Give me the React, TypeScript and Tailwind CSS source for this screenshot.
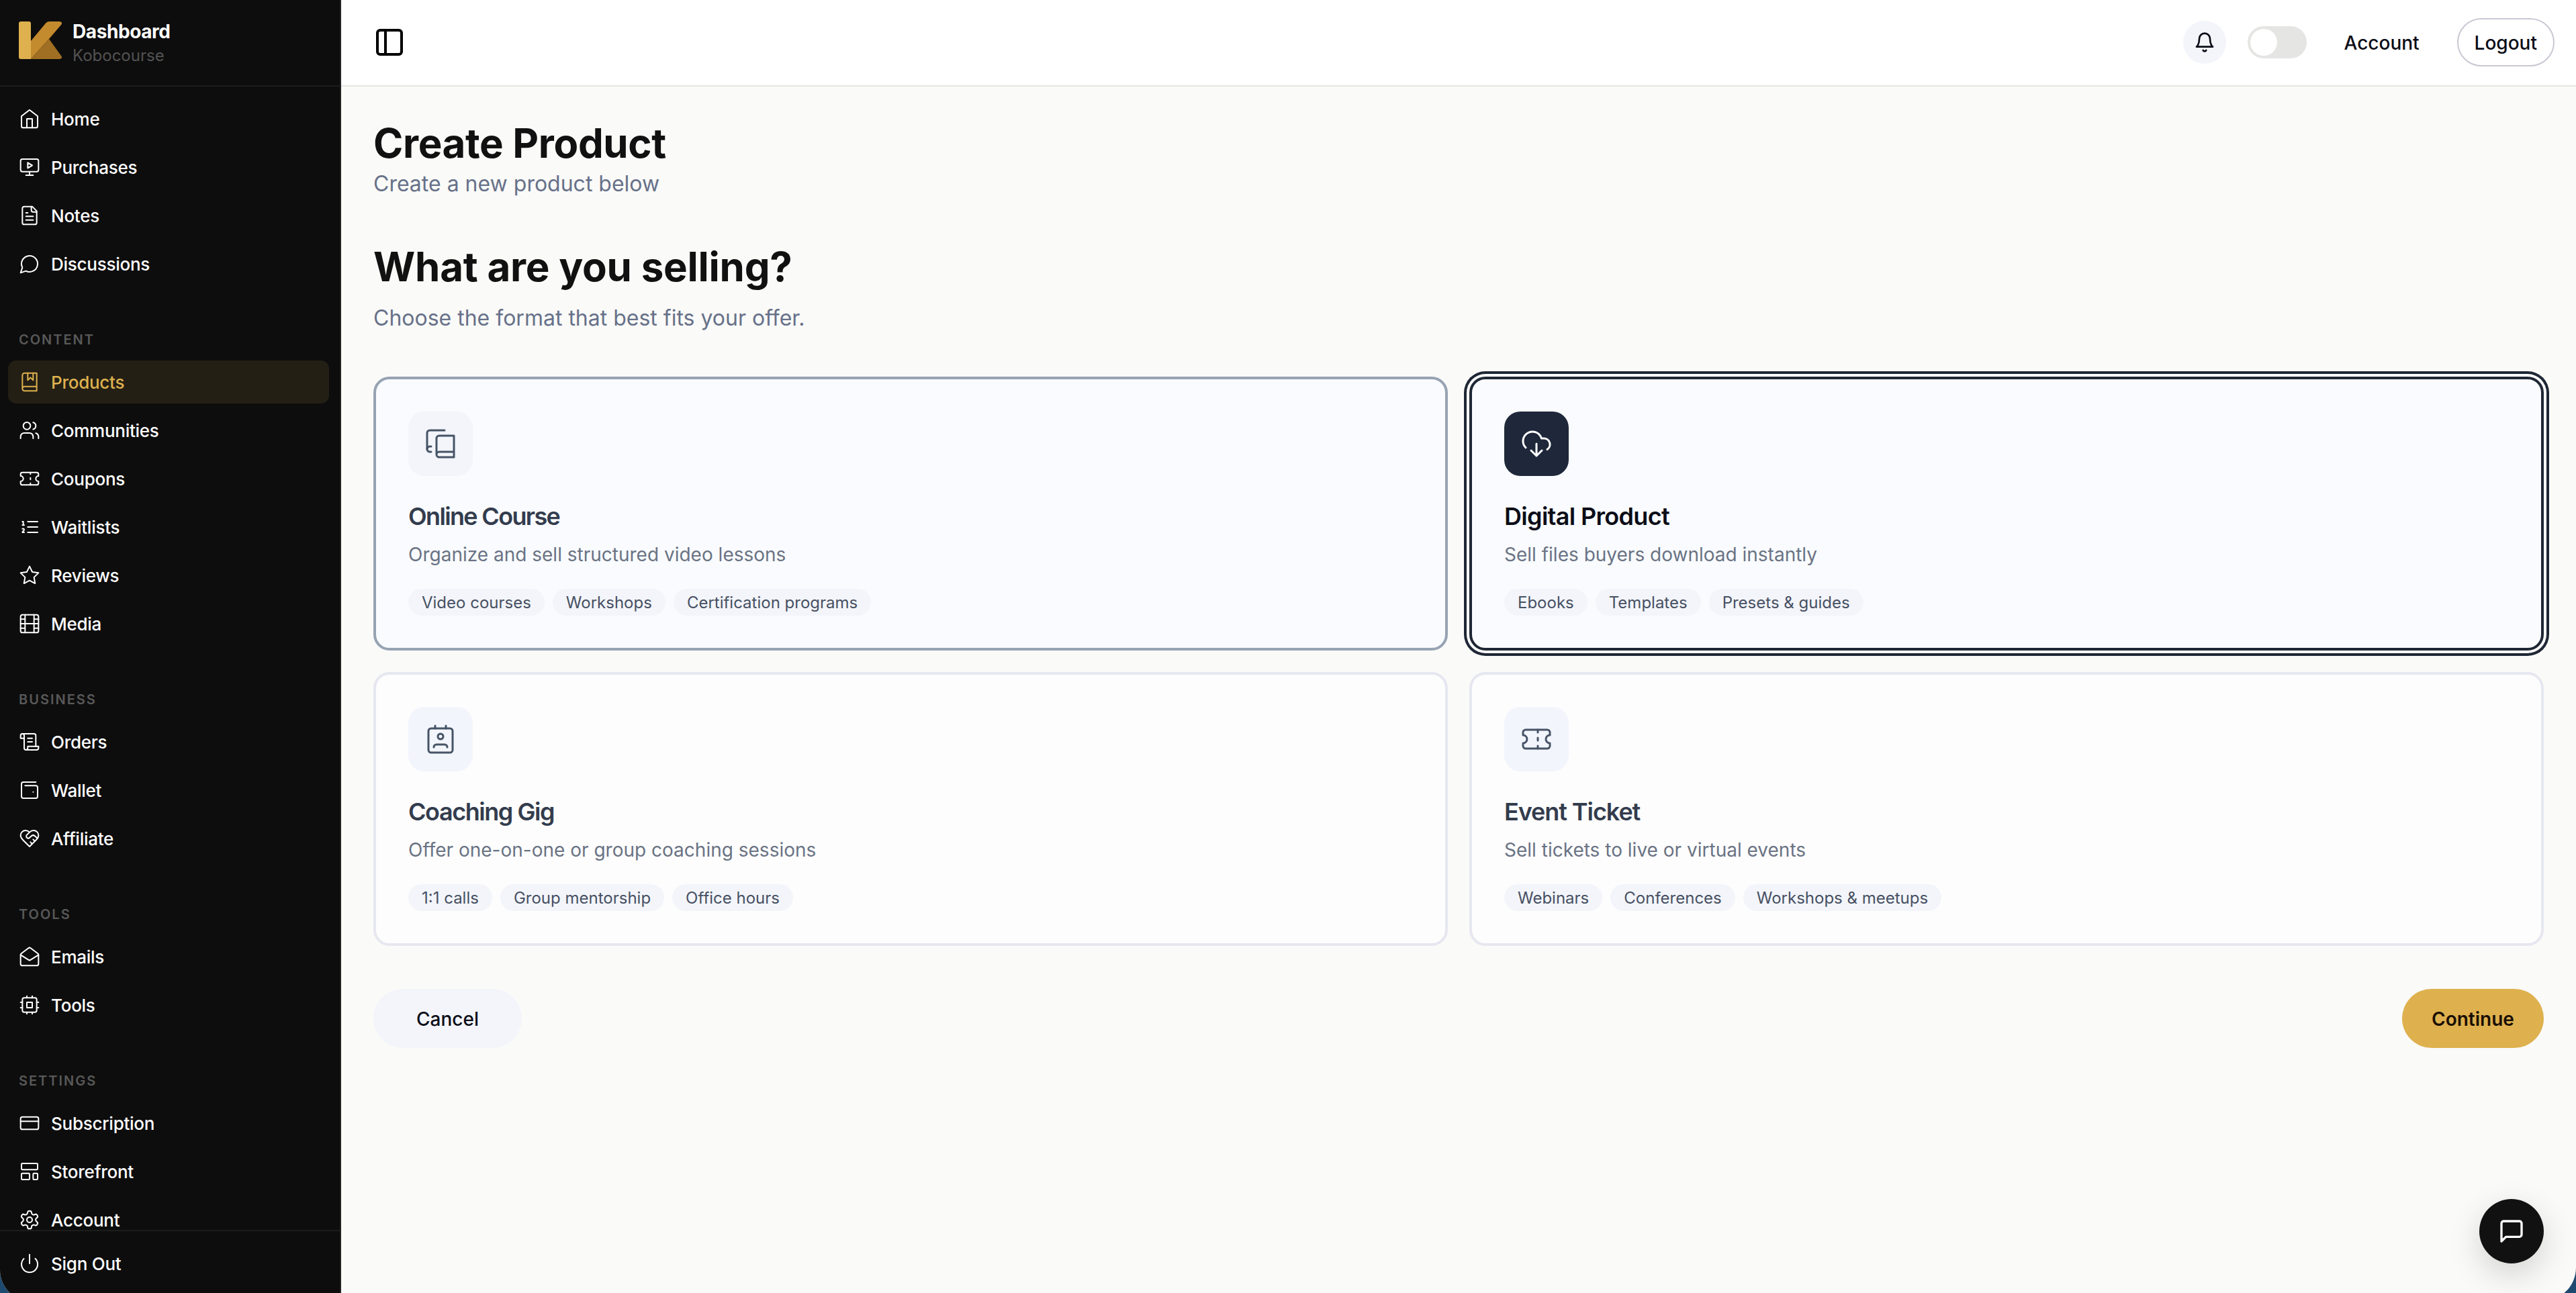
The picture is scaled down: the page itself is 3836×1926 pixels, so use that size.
import type { ReactNode } from "react";

type IconName =
  | "home"
  | "monitorPlay"
  | "fileText"
  | "messageCircle"
  | "bookMarked"
  | "users"
  | "ticket"
  | "listOrdered"
  | "star"
  | "film"
  | "scroll"
  | "wallet"
  | "handshake"
  | "mailOpen"
  | "cpu"
  | "creditCard"
  | "layout"
  | "settings"
  | "power"
  | "panelLeft"
  | "bell"
  | "bookCopy"
  | "cloudDownload"
  | "contact"
  | "messageSquare";

const ICONS: Record<IconName, ReactNode> = {
  home: (
    <>
      <path d="m3 9 9-7 9 7v11a2 2 0 0 1-2 2H5a2 2 0 0 1-2-2z" />
      <path d="M9 22V12h6v10" />
    </>
  ),
  monitorPlay: (
    <>
      <path d="m10 7 5 3-5 3Z" />
      <rect width="20" height="14" x="2" y="3" rx="2" />
      <path d="M12 17v4M8 21h8" />
    </>
  ),
  fileText: (
    <>
      <path d="M15 2H6a2 2 0 0 0-2 2v16a2 2 0 0 0 2 2h12a2 2 0 0 0 2-2V7Z" />
      <path d="M14 2v4a2 2 0 0 0 2 2h4M10 9H8M16 13H8M16 17H8" />
    </>
  ),
  messageCircle: <path d="M7.9 20A9 9 0 1 0 4 16.1L2 22Z" />,
  bookMarked: (
    <>
      <path d="M4 19.5v-15A2.5 2.5 0 0 1 6.5 2H20v20H6.5a2.5 2.5 0 0 1 0-5H20" />
      <path d="M10 2v8l3-3 3 3V2" />
    </>
  ),
  users: (
    <>
      <path d="M16 21v-2a4 4 0 0 0-4-4H6a4 4 0 0 0-4 4v2" />
      <circle cx="9" cy="7" r="4" />
      <path d="M22 21v-2a4 4 0 0 0-3-3.87M16 3.13a4 4 0 0 1 0 7.75" />
    </>
  ),
  ticket: (
    <>
      <path d="M2 9a3 3 0 0 1 0 6v2a2 2 0 0 0 2 2h16a2 2 0 0 0 2-2v-2a3 3 0 0 1 0-6V7a2 2 0 0 0-2-2H4a2 2 0 0 0-2 2Z" />
      <path d="M13 5v2M13 17v2M13 11v2" />
    </>
  ),
  listOrdered: (
    <>
      <path d="M10 6h11M10 12h11M10 18h11" />
      <path d="M4 6h1v4M4 10h2M6 18H4c0-1 2-2 2-3s-1-1.500-2-1" />
    </>
  ),
  star: (
    <path d="m12 2 3.090 6.260L22 9.270l-5 4.870 1.180 6.880L12 17.770l-6.180 3.250L7 14.140 2 9.270l6.910-1.010L12 2z" />
  ),
  film: (
    <>
      <rect width="20" height="20" x="2" y="2" rx="2.180" />
      <path d="M7 2v20M17 2v20M2 12h20M2 7h5M2 17h5M17 17h5M17 7h5" />
    </>
  ),
  scroll: (
    <>
      <path d="M8 21h12a2 2 0 0 0 2-2v-2H10v2a2 2 0 1 1-4 0V5a2 2 0 1 0-4 0v3h4" />
      <path d="M19 17V5a2 2 0 0 0-2-2H4M15 8h-5M15 12h-5" />
    </>
  ),
  wallet: (
    <>
      <path d="M19 3H5a2 2 0 0 0-2 2v14a2 2 0 0 0 2 2h14a2 2 0 0 0 2-2V9a2 2 0 0 0-2-2H7" />
      <path d="M16 14h.01" />
    </>
  ),
  handshake: (
    <>
      <path d="M19 14c1.490-1.460 3-3.210 3-5.500A5.500 5.500 0 0 0 16.500 3c-1.760 0-3 .5-4.500 2-1.500-1.500-2.740-2-4.500-2A5.500 5.500 0 0 0 2 8.500c0 2.300 1.500 4.050 3 5.500l7 7Z" />
      <path d="M12 5 9.040 7.960a2.170 2.170 0 0 0 0 3.080c.82.82 2.130.85 3 .07l2.070-1.900a2.820 2.820 0 0 1 3.790 0l2.960 2.660M18 15l-2-2M15 18l-2-2" />
    </>
  ),
  mailOpen: (
    <>
      <path d="M21.200 8.400c.5.38.8.97.8 1.600v10a2 2 0 0 1-2 2H4a2 2 0 0 1-2-2V10a2 2 0 0 1 .8-1.600l8-6a2 2 0 0 1 2.400 0l8 6Z" />
      <path d="m22 10-8.970 5.700a1.940 1.940 0 0 1-2.060 0L2 10" />
    </>
  ),
  cpu: (
    <>
      <rect x="4" y="4" width="16" height="16" rx="2" />
      <rect x="9" y="9" width="6" height="6" />
      <path d="M15 2v2M15 20v2M2 15h2M2 9h2M20 15h2M20 9h2M9 2v2M9 20v2" />
    </>
  ),
  creditCard: (
    <>
      <rect width="20" height="14" x="2" y="5" rx="2" />
      <path d="M2 10h20" />
    </>
  ),
  layout: (
    <>
      <rect width="18" height="7" x="3" y="3" rx="1" />
      <rect width="9" height="7" x="3" y="14" rx="1" />
      <rect width="5" height="7" x="16" y="14" rx="1" />
    </>
  ),
  settings: (
    <>
      <path d="M12.220 2h-.44a2 2 0 0 0-2 2v.18a2 2 0 0 1-1 1.730l-.43.25a2 2 0 0 1-2 0l-.15-.08a2 2 0 0 0-2.730.73l-.22.38a2 2 0 0 0 .73 2.730l.15.1a2 2 0 0 1 1 1.720v.51a2 2 0 0 1-1 1.740l-.15.09a2 2 0 0 0-.73 2.730l.22.38a2 2 0 0 0 2.730.73l.15-.08a2 2 0 0 1 2 0l.43.25a2 2 0 0 1 1 1.730V20a2 2 0 0 0 2 2h.44a2 2 0 0 0 2-2v-.18a2 2 0 0 1 1-1.730l.43-.25a2 2 0 0 1 2 0l.15.08a2 2 0 0 0 2.730-.73l.22-.39a2 2 0 0 0-.73-2.730l-.15-.08a2 2 0 0 1-1-1.740v-.5a2 2 0 0 1 1-1.740l.15-.09a2 2 0 0 0 .73-2.730l-.22-.38a2 2 0 0 0-2.730-.73l-.15.08a2 2 0 0 1-2 0l-.43-.25a2 2 0 0 1-1-1.730V4a2 2 0 0 0-2-2z" />
      <circle cx="12" cy="12" r="3" />
    </>
  ),
  power: <path d="M12 2v10M18.400 6.600a9 9 0 1 1-12.770.04" />,
  panelLeft: (
    <>
      <rect width="18" height="18" x="3" y="3" rx="2" />
      <path d="M9 3v18" />
    </>
  ),
  bell: (
    <path d="M6 8a6 6 0 0 1 12 0c0 7 3 9 3 9H3s3-2 3-9M10.300 21a1.940 1.940 0 0 0 3.400 0" />
  ),
  bookCopy: (
    <>
      <path d="M2 16V4a2 2 0 0 1 2-2h11" />
      <path d="M5 14H4a2 2 0 1 0 0 4h1M22 18H11a2 2 0 1 0 0 4h11V6H11a2 2 0 0 0-2 2v12" />
    </>
  ),
  cloudDownload: (
    <path d="M4 14.899A7 7 0 1 1 15.710 8h1.790a4.500 4.500 0 0 1 2.500 8.242M12 12v9M8 17l4 4 4-4" />
  ),
  contact: (
    <>
      <path d="M17 18a2 2 0 0 0-2-2H9a2 2 0 0 0-2 2" />
      <rect width="18" height="18" x="3" y="4" rx="2" />
      <circle cx="12" cy="10" r="2" />
      <path d="M8 2v2M16 2v2" />
    </>
  ),
  messageSquare: <path d="M21 15a2 2 0 0 1-2 2H7l-4 4V5a2 2 0 0 1 2-2h14a2 2 0 0 1 2 2z" />,
};

function Icon({ name, size = 32, stroke = 1.5 }: { name: IconName; size?: number; stroke?: number }) {
  return (
    <svg
      width={size}
      height={size}
      viewBox="0 0 24 24"
      fill="none"
      stroke="currentColor"
      strokeWidth={stroke}
      strokeLinecap="round"
      strokeLinejoin="round"
      className="shrink-0"
    >
      {ICONS[name]}
    </svg>
  );
}

type NavItem = { label: string; icon: IconName; active?: boolean };

const NAV: { title?: string; items: NavItem[] }[] = [
  {
    items: [
      { label: "Home", icon: "home" },
      { label: "Purchases", icon: "monitorPlay" },
      { label: "Notes", icon: "fileText" },
      { label: "Discussions", icon: "messageCircle" },
    ],
  },
  {
    title: "Content",
    items: [
      { label: "Products", icon: "bookMarked", active: true },
      { label: "Communities", icon: "users" },
      { label: "Coupons", icon: "ticket" },
      { label: "Waitlists", icon: "listOrdered" },
      { label: "Reviews", icon: "star" },
      { label: "Media", icon: "film" },
    ],
  },
  {
    title: "Business",
    items: [
      { label: "Orders", icon: "scroll" },
      { label: "Wallet", icon: "wallet" },
      { label: "Affiliate", icon: "handshake" },
    ],
  },
  {
    title: "Tools",
    items: [
      { label: "Emails", icon: "mailOpen" },
      { label: "Tools", icon: "cpu" },
    ],
  },
  {
    title: "Settings",
    items: [
      { label: "Subscription", icon: "creditCard" },
      { label: "Storefront", icon: "layout" },
      { label: "Account", icon: "settings" },
    ],
  },
];

type Product = {
  title: string;
  titleClass: string;
  description: string;
  icon: IconName;
  tags: string[];
  card: string;
  badge: string;
};

const PRODUCTS: Product[] = [
  {
    title: "Online Course",
    titleClass: "text-[#333c4d] tracking-[-0.046em]",
    description: "Organize and sell structured video lessons",
    icon: "bookCopy",
    tags: ["Video courses", "Workshops", "Certification programs"],
    card: "border-[#97a3b3] bg-[#f9fbfe]",
    badge: "bg-[#f3f5fa] text-[#475467]",
  },
  {
    title: "Digital Product",
    titleClass: "text-[#0b0d17] tracking-[-0.019em]",
    description: "Sell files buyers download instantly",
    icon: "cloudDownload",
    tags: ["Ebooks", "Templates", "Presets & guides"],
    card: "border-[#1f2735] bg-[#f9fbfe] ring-4 ring-[#1f2735] ring-offset-4 ring-offset-white",
    badge: "bg-[#1f283a] text-white",
  },
  {
    title: "Coaching Gig",
    titleClass: "text-[#333c4d] tracking-[-0.04em]",
    description: "Offer one-on-one or group coaching sessions",
    icon: "contact",
    tags: ["1:1 calls", "Group mentorship", "Office hours"],
    card: "border-[#e6e7f0] bg-[#fdfdfd]",
    badge: "bg-[#f2f5fb] text-[#475467]",
  },
  {
    title: "Event Ticket",
    titleClass: "text-[#333c4d] tracking-[-0.03em]",
    description: "Sell tickets to live or virtual events",
    icon: "ticket",
    tags: ["Webinars", "Conferences", "Workshops & meetups"],
    card: "border-[#e6e7f0] bg-[#fdfdfd]",
    badge: "bg-[#f2f5fb] text-[#475467]",
  },
];

function Logo() {
  return (
    <svg width="64" height="56" viewBox="0 0 64 56" className="shrink-0">
      <path d="M41 1.500Q43 0 45.500 0H61q5 1 2 5L45 26 18 56V29z" fill="#c48a2e" />
      <path d="M45 26 63 51q3 4-2 5H18z" fill="#a06f24" />
      <path d="M3 0h12q3 0 3 3v53H3q-3 0-3-3V3q0-3 3-3z" fill="#deb14e" />
    </svg>
  );
}

function NavLink({ item }: { item: NavItem }) {
  return (
    <a
      className={`flex h-16 items-center gap-4 rounded-xl px-4 text-[26px] font-medium tracking-[-0.01em] ${
        item.active ? "bg-[#231f15] text-[#deb14e]" : "text-white"
      }`}
    >
      <Icon name={item.icon} />
      {item.label}
    </a>
  );
}

function Sidebar() {
  return (
    <aside className="flex w-[508px] shrink-0 flex-col border-r-2 border-[#222] bg-[#0d0d0d]">
      <div className="flex h-[129px] shrink-0 items-center gap-4 border-b-2 border-[#1c1c1c] px-7 pb-2">
        <Logo />
        <div className="pt-2.5">
          <div className="text-[28px] leading-9 font-bold tracking-[-0.015em] text-white">Dashboard</div>
          <div className="text-[24px] leading-9 text-[#525252]">Kobocourse</div>
        </div>
      </div>

      <nav className="min-h-0 flex-1 overflow-hidden pt-4 pr-4 pl-3">
        {NAV.map((group, i) => (
          <div key={i}>
            {group.title && (
              <div className="mt-12 flex h-16 items-center px-4 pt-0.5 text-[20px] font-semibold tracking-widest text-[#585858] uppercase">
                {group.title}
              </div>
            )}
            <div className="flex flex-col gap-2">
              {group.items.map((item) => (
                <NavLink key={item.label} item={item} />
              ))}
            </div>
          </div>
        ))}
      </nav>

      <div className="h-[94px] shrink-0 border-t-2 border-[#1c1c1c] pt-4 pr-4 pl-3">
        <NavLink item={{ label: "Sign Out", icon: "power" }} />
      </div>
    </aside>
  );
}

function Header() {
  return (
    <header className="flex h-[129px] shrink-0 items-center justify-between border-b-2 border-[#e5e5e3] bg-white pr-8 pb-px pl-12">
      <button className="text-black">
        <Icon name="panelLeft" size={48} stroke={2} />
      </button>
      <div className="flex items-center gap-8 text-[28px] font-medium text-[#0b0d17]">
        <div className="flex size-16 items-center justify-center rounded-full bg-[#f3f5fb]">
          <Icon name="bell" stroke={2} />
        </div>
        <div className="flex h-12 w-[88px] items-center rounded-full bg-[#e5e5e3] px-1">
          <div className="size-10 rounded-full bg-white" />
        </div>
        <div className="px-6 pt-0.5">Account</div>
        <button className="h-[72px] rounded-full border-2 border-[#c8c9d3] px-6 pt-0.5">Logout</button>
      </div>
    </header>
  );
}

function ProductCard({ product }: { product: Product }) {
  return (
    <div className={`h-[408px] rounded-3xl border-4 p-12 ${product.card}`}>
      <div className={`flex size-24 items-center justify-center rounded-3xl ${product.badge}`}>
        <Icon name={product.icon} size={48} />
      </div>
      <h3 className={`mt-8 text-[36px] leading-[56px] font-semibold ${product.titleClass}`}>
        {product.title}
      </h3>
      <p className="mt-[9px] text-[28px] leading-10 text-[#6a7384]">{product.description}</p>
      <div className="mt-[31px] flex gap-3">
        {product.tags.map((tag) => (
          <span
            key={tag}
            className="rounded-full bg-[#f3f5fa] px-5 pt-[5px] pb-[3px] text-[24px] leading-8 text-[#475063]"
          >
            {tag}
          </span>
        ))}
      </div>
    </div>
  );
}

export default function App() {
  return (
    <div className="h-screen w-full overflow-hidden bg-[#1f4a70] font-['Inter',sans-serif]">
      {/* Window frame runs a little past the bottom edge */}
      <div className="relative h-[calc(100%+12px)] overflow-hidden rounded-br-[50px] rounded-bl-[46px] bg-[#fafaf8]">
        <div className="flex h-screen">
          <Sidebar />

          <div className="flex min-w-0 flex-1 flex-col">
            <Header />
            <main className="flex-1 px-12 pt-12">
              <h1 className="text-[60px] leading-[72px] font-bold tracking-[-0.006em] text-[#111]">
                Create Product
              </h1>
              <p className="text-[32px] leading-[50px] text-[#677189]">Create a new product below</p>

              <h2 className="mt-[62px] text-[60px] leading-[72px] font-bold tracking-[-0.004em] text-[#111]">
                What are you selling?
              </h2>
              <p className="mt-4 text-[32px] leading-[50px] text-[#677189]">
                Choose the format that best fits your offer.
              </p>

              <div className="mt-[62px] grid grid-cols-2 gap-8">
                {PRODUCTS.map((p) => (
                  <ProductCard key={p.title} product={p} />
                ))}
              </div>

              <div className="mt-16 flex items-center justify-between">
                <button className="h-[88px] rounded-full bg-[#f3f5fb] px-16 pt-0.5 text-[28px] font-medium text-[#0b0d17]">
                  Cancel
                </button>
                <button className="h-[88px] w-[211px] rounded-full bg-[#deb14e] pt-0.5 text-[28px] font-semibold text-[#1a0f05]">
                  Continue
                </button>
              </div>
            </main>
          </div>
        </div>

        {/* Below the fold strip keeps the sidebar colour */}
        <div className="h-3 w-[508px] bg-[#0d0d0d]" />

        {/* Chat launcher */}
        <button className="absolute right-12 bottom-14 flex size-24 items-center justify-center rounded-full bg-[#111] text-white shadow-[0_16px_48px_rgba(0,0,0,0.16)]">
          <Icon name="messageSquare" size={40} stroke={2} />
        </button>
      </div>
    </div>
  );
}
